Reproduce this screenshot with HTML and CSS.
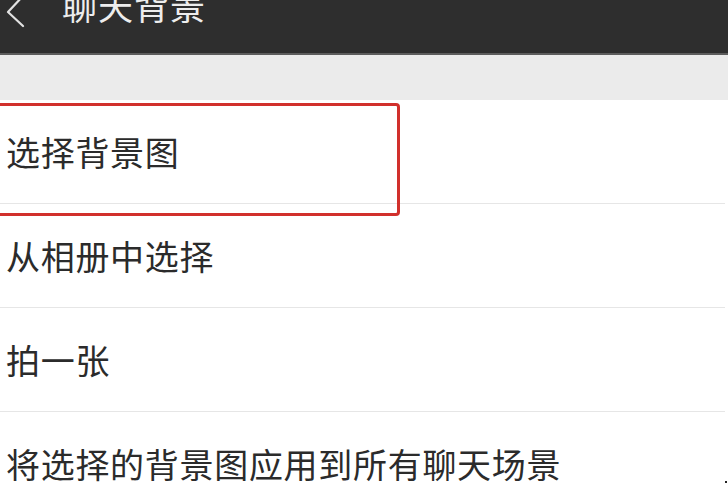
FILE: index.html
```html
<!DOCTYPE html>
<html lang="zh-CN">
<head>
<meta charset="utf-8">
<title>聊天背景</title>
<link rel="stylesheet" href="styles.css">
</head>
<body>
<div class="page">
  <header class="topbar">
    <svg class="back" width="24" height="30" viewBox="0 0 24 30" aria-hidden="true">
      <polyline points="17,-4 2,12 17,26" fill="none" stroke="#e2e2e2" stroke-width="2.2" stroke-linecap="round" stroke-linejoin="round"/>
    </svg>
    <h1 class="title">聊天背景</h1>
  </header>
  <div class="gap"></div>
  <ul class="list">
    <li class="item">选择背景图</li>
    <li class="item">从相册中选择</li>
    <li class="item">拍一张</li>
    <li class="item">将选择的背景图应用到所有聊天场景</li>
  </ul>
  <div class="highlight"></div>
  <div class="dot"></div>
</div>
</body>
</html>
```

FILE: styles.css
```css
html, body {
  margin: 0;
  padding: 0;
  background: #ffffff;
}
body {
  font-family: "Noto Sans CJK SC", "Noto Sans", sans-serif;
  width: 728px;
  height: 484px;
  overflow: hidden;
}
.page {
  position: relative;
  width: 728px;
  height: 484px;
  overflow: hidden;
}
.topbar {
  height: 53px;
  background: #2e2e2e;
  border-bottom: 2px solid #5c5c5c;
  display: flex;
  align-items: flex-start;
  box-sizing: content-box;
}
.back {
  margin-left: 6px;
  margin-top: 0;
  flex: none;
}
.title {
  margin: -15px 0 0 32px;
  font-size: 35px;
  font-weight: 400;
  line-height: 40px;
  color: #ededed;
  letter-spacing: 1px;
}
.gap {
  height: 45px;
  background: #ebebeb;
}
.list {
  list-style: none;
  margin: 0;
  padding: 0;
}
.item {
  height: 103px;
  border-bottom: 1.5px solid #e6e6e6;
  display: flex;
  align-items: center;
  padding-left: 6px;
  font-size: 34px;
  letter-spacing: 0.7px;
  color: #2b2b2b;
  margin-right: 3px;
}
.highlight {
  position: absolute;
  left: -6px;
  top: 103px;
  width: 400px;
  height: 107px;
  border: 3px solid #d1302c;
  border-radius: 4px;
}
.dot {
  position: absolute;
  left: 725px;
  top: 481px;
  width: 2px;
  height: 2px;
  background: #222;
}
```
